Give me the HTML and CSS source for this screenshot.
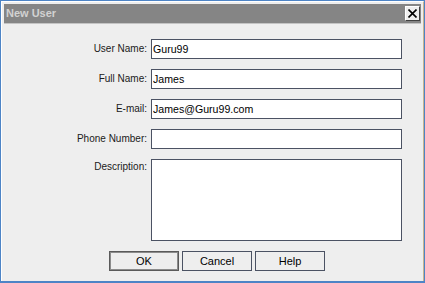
FILE: index.html
```html
<!DOCTYPE html>
<html>
<head>
<meta charset="utf-8">
<link rel="stylesheet" href="styles.css">
</head>
<body>
<div class="frame">
  <div class="inner">
    <div class="titlebar">
      <span class="title">New User</span>
      <button class="close" aria-label="Close">
        <svg width="9" height="9" viewBox="0 0 9 9"><path d="M0.5 0.5 L8.5 8.5 M8.5 0.5 L0.5 8.5" stroke="#000" stroke-width="1.6" fill="none"/></svg>
      </button>
    </div>
    <div class="content">
      <div class="form">
        <label class="lbl">User Name:</label>
        <input class="field" type="text" value="Guru99">
        <label class="lbl">Full Name:</label>
        <input class="field" type="text" value="James">
        <label class="lbl">E-mail:</label>
        <input class="field" type="text" value="James@Guru99.com">
        <label class="lbl">Phone Number:</label>
        <input class="field" type="text" value="">
        <label class="lbl lbl-top">Description:</label>
        <textarea class="field area"></textarea>
      </div>
      <div class="buttons">
        <button class="btn btn-default">OK</button>
        <button class="btn">Cancel</button>
        <button class="btn">Help</button>
      </div>
    </div>
  </div>
</div>
</body>
</html>
```
FILE: styles.css
```css
html, body {
  margin: 0;
  padding: 0;
  background: #eeeeee;
}
.frame {
  width: 425px;
  height: 283px;
  box-sizing: border-box;
  border-top: 1px solid #4d84c6;
  border-left: 1px solid #4d84c6;
  border-right: 1px solid #4d84c6;
  border-bottom: 2px solid #4d84c6;
  background: #eeeeee;
}
.inner {
  height: 100%;
  box-sizing: border-box;
  border-top: 1px solid #ffffff;
  border-left: 1px solid #ffffff;
  border-right: 1px solid #c8b490;
  padding: 2px 2px 0 2px;
}
.titlebar {
  height: 19px;
  background: #858585;
  border-bottom: 1px solid #c4c4c4;
  display: flex;
  align-items: center;
  justify-content: space-between;
  padding: 0 1px 0 2px;
}
.title {
  font-family: "Liberation Sans", Arial, sans-serif;
  font-weight: bold;
  font-size: 11px;
  color: #d2d2d2;
  line-height: 19px;
}
.close {
  width: 15px;
  height: 15px;
  box-sizing: border-box;
  margin: 0;
  padding: 0;
  background: #eeeeee;
  border-top: 1px solid #ffffff;
  border-left: 1px solid #ffffff;
  border-right: 1px solid #404040;
  border-bottom: 1px solid #404040;
  display: flex;
  align-items: center;
  justify-content: center;
}
.content {
  padding-top: 15px;
}
.form {
  display: grid;
  grid-template-columns: 143px 251px;
  grid-template-rows: 20px 20px 20px 20px 82px;
  column-gap: 4px;
  row-gap: 10px;
}
.lbl {
  font-family: "Liberation Sans", Arial, sans-serif;
  font-size: 10px;
  color: #1a1a1a;
  text-align: right;
  line-height: 20px;
}
.lbl-top {
  line-height: 16px;
}
.field {
  box-sizing: border-box;
  width: 251px;
  height: 20px;
  margin: 0;
  border: 1px solid #4b5263;
  padding: 0 1px;
  background: #ffffff;
  font-family: "Liberation Sans", Arial, sans-serif;
  font-size: 10.6px;
  color: #000000;
  outline: none;
}
.area {
  height: 82px;
  resize: none;
}
.buttons {
  display: flex;
  gap: 3px;
  margin-top: 10px;
  margin-left: 105px;
}
.btn {
  box-sizing: border-box;
  width: 70px;
  height: 20px;
  margin: 0;
  padding: 0;
  background: #eeeeee;
  border: 1px solid #4b5263;
  font-family: "Liberation Sans", Arial, sans-serif;
  font-size: 11px;
  color: #000000;
}
.btn-default {
  border: 1px solid #5a5a5a;
  box-shadow: inset 0 0 0 1px #8c8c8c;
}
```
